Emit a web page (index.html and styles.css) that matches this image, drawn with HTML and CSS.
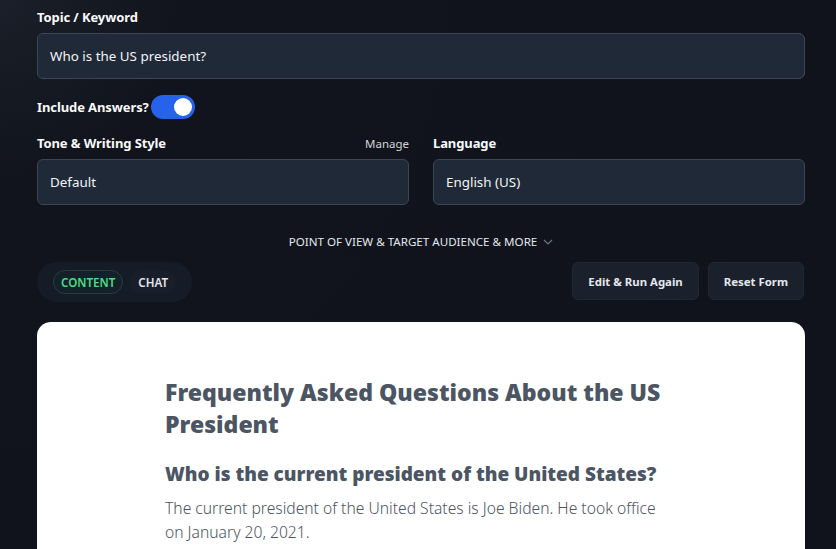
FILE: index.html
```html
<!DOCTYPE html>
<html lang="en">
<head>
<meta charset="utf-8">
<title>FAQ Generator</title>
<link rel="stylesheet" href="styles.css">
</head>
<body>
<div class="page">
  <div class="field">
    <label class="label">Topic / Keyword</label>
    <div class="input">Who is the US president?</div>
  </div>

  <div class="toggle-row">
    <span class="label">Include Answers?</span>
    <span class="toggle"><span class="knob"></span></span>
  </div>

  <div class="two-col">
    <div class="field">
      <div class="label-row">
        <label class="label">Tone &amp; Writing Style</label>
        <span class="manage">Manage</span>
      </div>
      <div class="input">Default</div>
    </div>
    <div class="field">
      <div class="label-row">
        <label class="label">Language</label>
      </div>
      <div class="input">English (US)</div>
    </div>
  </div>

  <div class="more">
    <span>POINT OF VIEW &amp; TARGET AUDIENCE &amp; MORE</span>
    <svg class="chev" width="10" height="6" viewBox="0 0 10 6"><path d="M1 1l4 4 4-4" fill="none" stroke="#6b7280" stroke-width="1.2"/></svg>
  </div>

  <div class="action-row">
    <div class="tabs">
      <span class="tab active">CONTENT</span>
      <span class="tab">CHAT</span>
    </div>
    <div class="buttons">
      <button class="btn">Edit &amp; Run Again</button>
      <button class="btn">Reset Form</button>
    </div>
  </div>

  <div class="card">
    <article class="prose">
      <h1>Frequently Asked Questions About the US President</h1>
      <h2>Who is the current president of the United States?</h2>
      <p>The current president of the United States is Joe Biden. He took office on January 20, 2021.</p>
    </article>
  </div>
</div>
</body>
</html>
```

FILE: styles.css
```css
html, body {
  margin: 0;
  height: 100%;
  overflow: hidden;
}
body {
  background: radial-gradient(circle at 0 0, #1b1f29 0, #11141c 180px, #10131b 100%);
  font-family: "Noto Sans", "Open Sans", "Liberation Sans", sans-serif;
  color: #f3f4f6;
}
.page {
  width: 768px;
  padding: 7px 0 0 37px;
  display: flex;
  flex-direction: column;
}
.label {
  display: block;
  font-size: 13px;
  font-weight: 700;
  line-height: 20px;
  color: #f9fafb;
  letter-spacing: -0.1px;
}
.field { display: flex; flex-direction: column; gap: 6px; }
.input {
  box-sizing: border-box;
  height: 46px;
  border: 1px solid #3c4754;
  background: #1f2937;
  border-radius: 6px;
  padding: 0 12px;
  display: flex;
  align-items: center;
  font-size: 13.4px;
  color: #f3f4f6;
}
.toggle-row {
  margin-top: 16px;
  display: flex;
  align-items: center;
  gap: 2px;
  height: 24px;
}
.toggle {
  width: 44px;
  height: 24px;
  border-radius: 12px;
  background: #2563eb;
  display: flex;
  align-items: center;
  justify-content: flex-end;
  padding: 0 3px;
  box-sizing: border-box;
}
.knob {
  width: 18px;
  height: 18px;
  border-radius: 50%;
  background: #fff;
}
.two-col {
  margin-top: 14px;
  display: grid;
  grid-template-columns: 1fr 1fr;
  gap: 24px;
}
.label-row {
  display: flex;
  justify-content: space-between;
  align-items: center;
}
.manage {
  font-size: 11.5px;
  color: #d1d5db;
}
.more {
  margin-top: 26px;
  height: 20px;
  display: flex;
  justify-content: center;
  align-items: center;
  gap: 6px;
  font-size: 11.6px;
  color: #e5e7eb;
}
.chev { margin-top: 1px; }
.action-row {
  margin-top: 11px;
  display: flex;
  justify-content: space-between;
  align-items: flex-start;
}
.tabs {
  height: 40px;
  box-sizing: border-box;
  padding: 0 16px;
  border-radius: 20px;
  background: #161c27;
  display: flex;
  align-items: center;
  gap: 7px;
}
.tab {
  height: 24px;
  box-sizing: border-box;
  padding: 0 7px;
  border-radius: 12px;
  display: flex;
  align-items: center;
  font-size: 11.6px;
  font-weight: 600;
  color: #e5e7eb;
  background: #181f2b;
  border: 1px solid transparent;
}
.tab.active {
  color: #4ade80;
  background: #14202a;
  border-color: #23403a;
}
.buttons { display: flex; gap: 9px; margin-right: 1px; }
.btn {
  height: 38px;
  box-sizing: border-box;
  padding: 0 15px;
  border-radius: 6px;
  border: 1px solid #1f2734;
  background: #1a212d;
  color: #e5e7eb;
  font-family: inherit;
  font-size: 11.4px;
  font-weight: 700;
}
.card {
  margin-top: 20px;
  background: #fff;
  border-radius: 14px;
  height: 300px;
  padding-top: 54px;
  box-sizing: border-box;
}
.prose {
  width: 512px;
  margin: 0 auto;
  color: #4b5563;
}
.prose h1 {
  margin: 0;
  font-size: 23.05px;
  line-height: 32px;
  font-weight: 900;
}
.prose h2 {
  margin: 20px 0 0;
  font-size: 19px;
  line-height: 28px;
  font-weight: 900;
}
.prose p {
  margin: 8px 0 0;
  font-size: 15.65px;
  line-height: 24px;
  font-weight: 300;
}
```
